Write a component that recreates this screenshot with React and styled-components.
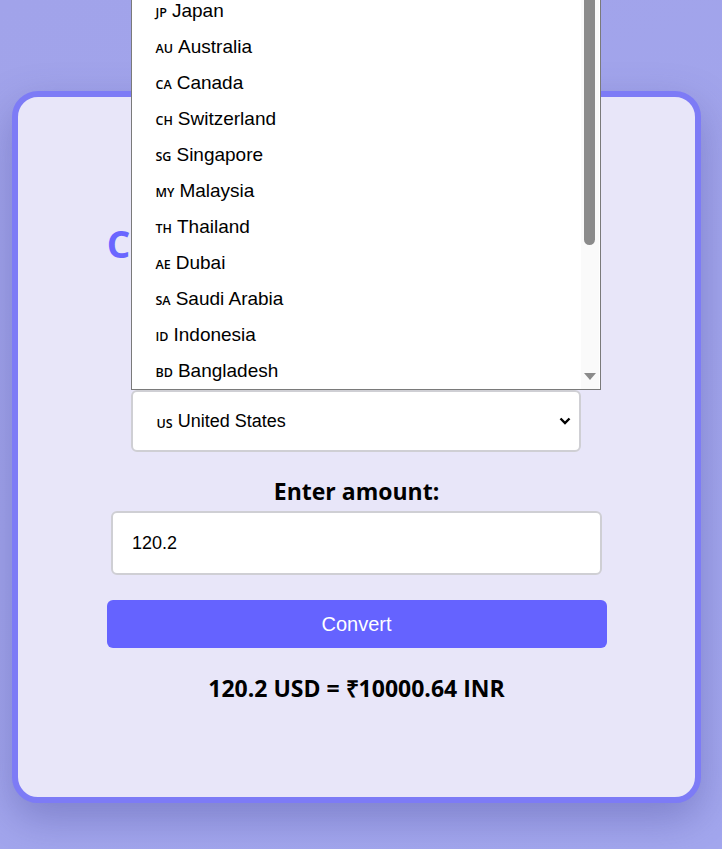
import React, { useState } from "react";
import styled, { createGlobalStyle } from "styled-components";

const GlobalStyle = createGlobalStyle`
  html, body {
    margin: 0;
    padding: 0;
  }
  body {
    font-family: "Liberation Sans", Arial, sans-serif;
    background: linear-gradient(160deg, #a1a3ea 0%, #a3a7ee 100%);
    min-height: 100vh;
    overflow: hidden;
  }
`;

const countries = [
  ["IN", "India"],
  ["GB", "United Kingdom"],
  ["EU", "Europe"],
  ["JP", "Japan"],
  ["AU", "Australia"],
  ["CA", "Canada"],
  ["CH", "Switzerland"],
  ["SG", "Singapore"],
  ["MY", "Malaysia"],
  ["TH", "Thailand"],
  ["AE", "Dubai"],
  ["SA", "Saudi Arabia"],
  ["ID", "Indonesia"],
  ["BD", "Bangladesh"],
];

const Page = styled.div`
  padding: 91px 21px 46px 12px;
`;

const Card = styled.div`
  width: 689px;
  height: 712px;
  box-sizing: border-box;
  border: 6px solid #7d7bf6;
  border-radius: 26px;
  background: #e8e6f9;
  box-shadow: 0 16px 40px rgba(60, 60, 140, 0.35);
  display: flex;
  flex-direction: column;
  align-items: center;
  padding-top: 124px;
`;

const Title = styled.h1`
  margin: 0;
  font-family: "Open Sans", sans-serif;
  font-weight: 700;
  font-size: 37px;
  line-height: 46px;
  letter-spacing: 7.6px;
  white-space: nowrap;
  color: #6a66ff;
`;

const Label = styled.label`
  font-family: "Open Sans", sans-serif;
  font-weight: 700;
  font-size: 23px;
  line-height: 30px;
  color: #000;
  margin-top: ${({ $top }) => $top}px;
  margin-bottom: 5px;
`;

const SelectWrap = styled.div`
  position: relative;
  width: 450px;
  margin-left: -2px;
`;

const SelectBox = styled.div`
  height: 62px;
  box-sizing: border-box;
  border: 2px solid #cfcfd4;
  border-radius: 6px;
  background: #fff;
  display: flex;
  align-items: center;
  justify-content: space-between;
  padding: 0 8px 0 24px;
  font-size: 18px;
  color: #000;
  cursor: pointer;
`;

const Code = styled.span`
  font-family: "Open Sans", sans-serif;
  font-weight: 600;
  font-size: 12.5px;
  margin-right: 5px;
  position: relative;
  top: 1px;
`;

const Dropdown = styled.div`
  position: absolute;
  left: 0;
  bottom: 100%;
  width: 470px;
  box-sizing: border-box;
  border: 1px solid #7a7a7a;
  background: #fff;
  display: flex;
`;

const List = styled.ul`
  list-style: none;
  margin: 0;
  padding: 0;
  flex: 1;
`;

const Option = styled.li`
  height: 36px;
  display: flex;
  align-items: center;
  padding-left: 24px;
  font-size: 19px;
  color: #000;
`;

const Scrollbar = styled.div`
  width: 18px;
  margin-right: 1px;
  background: #fafafa;
  display: flex;
  flex-direction: column;
  align-items: center;
  padding: 17px 0 8px;
`;

const Thumb = styled.div`
  width: 11px;
  height: 343px;
  border-radius: 6px;
  background: #8b8b8b;
`;

const Spacer = styled.div`
  flex: 1;
`;

const AmountInput = styled.input`
  width: 491px;
  height: 64px;
  box-sizing: border-box;
  border: 2px solid #cfcfd4;
  border-radius: 6px;
  background: #fff;
  padding: 0 19px;
  font-family: "Liberation Sans", Arial, sans-serif;
  font-size: 18px;
  color: #000;
  outline: none;
`;

const ConvertButton = styled.button`
  margin-top: 25px;
  width: 500px;
  height: 48px;
  border: none;
  border-radius: 6px;
  background: #6563ff;
  color: #fff;
  font-family: "Liberation Sans", Arial, sans-serif;
  font-size: 20px;
  cursor: pointer;
`;

const Result = styled.p`
  margin: 25px 0 0;
  font-family: "Open Sans", sans-serif;
  font-weight: 700;
  font-size: 23px;
  line-height: 30px;
  color: #000;
`;

const Chevron = () => (
  <svg width="12" height="8" viewBox="0 0 12 8">
    <path d="M1.5 1.5 L6 6 L10.5 1.5" fill="none" stroke="#000" strokeWidth="2.4" />
  </svg>
);

const DownArrow = () => (
  <svg width="12" height="8" viewBox="0 0 12 8">
    <path d="M0 0 H12 L6 7 Z" fill="#8b8b8b" />
  </svg>
);

export default function App() {
  const [amount, setAmount] = useState("120.2");

  return (
    <Page>
      <GlobalStyle />
      <Card>
        <Title>Currency Converter</Title>
        <Label $top={88}>Select country:</Label>
        <SelectWrap>
          <SelectBox>
            <span>
              <Code>US</Code>United States
            </span>
            <Chevron />
          </SelectBox>
          <Dropdown>
            <List>
              {countries.map(([code, name]) => (
                <Option key={code}>
                  <Code>{code}</Code>
                  {name}
                </Option>
              ))}
            </List>
            <Scrollbar>
              <Thumb />
              <Spacer />
              <DownArrow />
            </Scrollbar>
          </Dropdown>
        </SelectWrap>
        <Label $top={24}>Enter amount:</Label>
        <AmountInput value={amount} onChange={(e) => setAmount(e.target.value)} />
        <ConvertButton>Convert</ConvertButton>
        <Result>120.2 USD = ₹10000.64 INR</Result>
      </Card>
    </Page>
  );
}
